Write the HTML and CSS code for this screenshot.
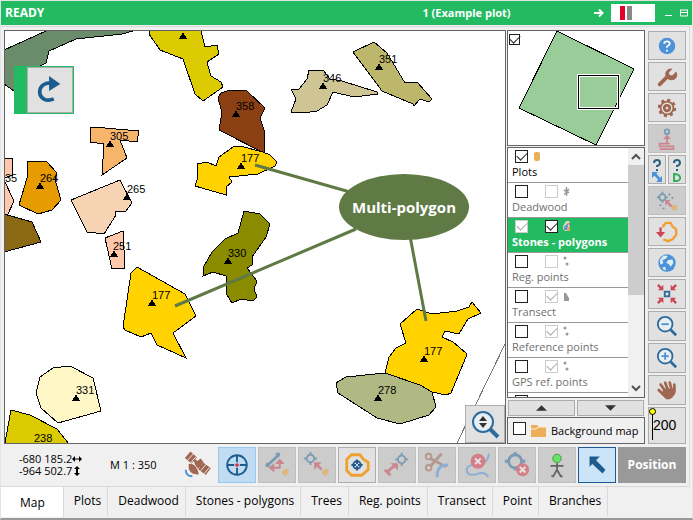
FILE: index.html
```html
<!DOCTYPE html>
<html lang="en">
<head>
<meta charset="utf-8">
<title>Example plot</title>
<link rel="stylesheet" href="styles.css">
</head>
<body>
<header class="titlebar">
  <span class="status">READY</span>
  <h1 class="title">1 (Example plot)</h1>
  <div class="window-tools">
    <svg class="arrow" viewBox="0 0 10 10"><path d="M0 5H7M5 1.500L8.500 5L5 8.500" fill="none" stroke="#fff" stroke-width="2"/></svg>
    <span class="gauge"><i class="bar red"></i><i class="bar grey"></i></span>
    <button class="win" aria-label="Minimize"><svg viewBox="0 0 8 8"><path d="M1 6.500H8" stroke="#fff"/></svg></button>
    <button class="win" aria-label="Restore"><svg viewBox="0 0 8 8"><path d="M.5 1V7H7.500V1M0 1H8M0 3.500H8" fill="none" stroke="#fff"/></svg></button>
  </div>
</header>

<div class="page">
  <main class="workspace">
    <section class="map">
      <svg class="canvas" viewBox="5 31 500 412" preserveAspectRatio="xMinYMin slice">
        <defs><path id="mark" d="M0 1L4 8H-4Z"/></defs>
        <g class="shapes">
          <path fill="#6b8c6b" d="M4 50L46 31V30H133V31L122 34L76 39L49 51L46 63L40 66L30 90L14 91L4 84Z"/>
          <path fill="#dbcb00" d="M150 30L149 34L160 50L183 59L195 94L203 101L223 87L221 82L211 76L207 62L219 54L217 45L205 47L201 31V30Z"/>
          <path fill="#8b4013" d="M218 98L221 93L230 90L247 91L265 108L260 118L264 130V153L219 130L222 112Z"/>
          <path fill="#ffd200" d="M197 164L207 162L216 166L219 157L233 147L240 146L263 152L270 155L277 162L275 166L258 174L229 177L232 182L226 187V195L195 186L198 177Z"/>
          <path fill="#cfc494" d="M309 70H323L330 79L342 81L377 92L378 94L354 97L333 92L327 105L317 111L303 113L291 112L296 99L291 89H299L307 79Z"/>
          <path fill="#bdb76b" d="M353 52L374 42L387 53L393 63L405 83L417 82L432 99L429 102L420 99L414 106L413 104L382 91Z"/>
          <path fill="#f6b56b" d="M90 128L93 127L139 131L137 142L120 140L127 158L102 175L104 144L90 142Z"/>
          <path fill="#e69b00" d="M27 161L47 162L57 173L55 179L61 200L52 210L38 214L19 205L27 178Z"/>
          <path fill="#f6d3b3" d="M71 200L120 180L132 203L126 211L115 212L116 215L104 234L87 232Z"/>
          <path fill="#ffc8ad" d="M105 238L123 231L125 268L112 269Z"/>
          <path fill="#ffc8ad" d="M4 159L12 158L13 175L4 178ZM4 180L14 201L8 214H4Z"/>
          <path fill="#8b6914" d="M4 214L32 222L41 242L4 252Z"/>
          <path fill="#8b8b00" d="M244 211L260 214L270 224L266 237L252 257V265L247 268L257 281L254 289L257 297L253 301L241 299L232 303L227 295L226 276L213 272L203 276L204 266L212 252L225 239L238 233Z"/>
          <path fill="#ffd200" d="M137 267L185 294L196 316L173 333L186 358L157 345L151 333L141 337L125 330L123 327L131 273Z"/>
          <path fill="#fff8c6" d="M53 368L70 366L93 378L101 411L58 423L41 408L36 393L40 377Z"/>
          <path fill="#dbcb00" d="M5 443L11 410L30 415L57 429L69 444H5Z"/>
          <path fill="#ffd200" d="M400 324L417 309L432 314L457 311L469 307L472 302L481 313L468 319L459 334L445 331L442 337L453 342L466 353V357L451 393L446 395L432 392L385 373L389 357L396 348L406 343Z"/>
          <path fill="#b0b883" d="M336 383L346 377L385 373L420 385L432 392L436 407L429 415L400 424L377 418L338 393Z"/>
          <path fill="none" class="edge" d="M506 342L457 443"/>
        </g>
        <g class="labels">
          <use href="#mark" x="183" y="31"/>
          <use href="#mark" x="236" y="109"/><text x="236" y="110">358</text>
          <use href="#mark" x="241" y="161"/><text x="241" y="162">177</text>
          <use href="#mark" x="323" y="81"/><text x="323" y="82">346</text>
          <use href="#mark" x="379" y="62"/><text x="379" y="63">351</text>
          <use href="#mark" x="110" y="139"/><text x="110" y="140">305</text>
          <use href="#mark" x="40" y="181"/><text x="40" y="182">264</text>
          <use href="#mark" x="127" y="192"/><text x="127" y="193">265</text>
          <use href="#mark" x="114" y="249"/><text x="113" y="250">251</text>
          <use href="#mark" x="228" y="256"/><text x="228" y="257">330</text>
          <use href="#mark" x="152" y="298"/><text x="152" y="299">177</text>
          <use href="#mark" x="76" y="393"/><text x="76" y="394">331</text>
          <use href="#mark" x="424" y="354"/><text x="424" y="355">177</text>
          <use href="#mark" x="378" y="393"/><text x="378" y="394">278</text>
          <text x="34" y="442">238</text>
          <text x="5" y="182">35</text>
        </g>
        <g class="callout">
          <path d="M255 165L350 192M175 306L356 229M426 321L410 236"/>
          <ellipse cx="404" cy="207" rx="65" ry="33"/>
          <text x="404" y="213">Multi-polygon</text>
        </g>
      </svg>
      <div class="redo-dock">
        <button class="btn redo" aria-label="Redo"><svg viewBox="0 0 30 32"><path d="M16 8.500C9 8 4 12 4 18C4 25 11 29 19 25.500" fill="none" stroke="#1d5d8e" stroke-width="4"/><path d="M14 1L26 9.500L14 17Z" fill="#1d5d8e"/></svg></button>
      </div>
      <button class="btn zoom-scale" aria-label="Zoom to scale"><svg viewBox="0 0 30 30"><circle cx="13" cy="13" r="10" fill="#e9eef2" stroke="#2d6c9c" stroke-width="2"/><path d="M20 20L28 28" stroke="#2d6c9c" stroke-width="4"/><path d="M13 7L17 12H9ZM13 19L17 14H9Z" fill="#333"/></svg></button>
    </section>

    <aside class="side">
      <div class="overview">
        <svg viewBox="508 31 136 114"><path d="M557 31L634 69L596 145L519 108Z" fill="#99cc99" stroke="#000" shape-rendering="crispEdges"/><rect x="578.500" y="75.500" width="40" height="33" fill="none" stroke="#fff" stroke-width="3"/><rect x="578.500" y="75.500" width="40" height="33" fill="none" stroke="#000"/></svg>
        <input class="check small" type="checkbox" aria-label="Show overview" checked>
      </div>
      <div class="layers">
        <ul class="layer-list">
          <li class="layer primary"><div class="flags"><input class="check" type="checkbox" id="l1" checked><svg viewBox="0 0 10 12"><rect x="2" y="2" width="6" height="9" rx="2" fill="#ecae58"/></svg></div><label for="l1">Plots</label></li>
          <li class="layer"><div class="flags"><input class="check" type="checkbox" id="l2"><input class="check dim" type="checkbox" aria-label="Lock Deadwood"><svg viewBox="0 0 10 12"><path d="M4.500 2V11M2 5L4.500 6.500L7 4M2 9L4.500 8L7 7" fill="none" stroke="#999" stroke-width="1.500"/></svg></div><label for="l2">Deadwood</label></li>
          <li class="layer active"><div class="flags"><input class="check dim" type="checkbox" id="l3" checked><input class="check" type="checkbox" aria-label="Lock Stones" checked><svg viewBox="0 0 10 12"><path d="M4 1H7L8 3V10L7 11H3L1 9V6Z" fill="#d7d7c5"/><path d="M2 7L6 3V10H2Z" fill="#5898d4"/><path d="M6 3H8V7Z" fill="#dd7554"/><path d="M5 7H8V11H5Z" fill="#e6a858"/></svg></div><label for="l3">Stones - polygons</label></li>
          <li class="layer"><div class="flags"><input class="check" type="checkbox" id="l4"><input class="check dim" type="checkbox" aria-label="Lock Reg. points"><svg viewBox="0 0 10 12"><circle cx="3" cy="3" r="1.500" fill="#999"/><circle cx="5" cy="9" r="1.500" fill="#999"/></svg></div><label for="l4">Reg. points</label></li>
          <li class="layer"><div class="flags"><input class="check" type="checkbox" id="l5"><input class="check dim" type="checkbox" aria-label="Lock Transect" checked><svg viewBox="0 0 10 12"><path d="M2 3L4 3L7 8V11H2Z" fill="#999"/></svg></div><label for="l5">Transect</label></li>
          <li class="layer"><div class="flags"><input class="check" type="checkbox" id="l6"><input class="check dim" type="checkbox" aria-label="Lock Reference points" checked><svg viewBox="0 0 10 12"><circle cx="3" cy="3" r="1.500" fill="#999"/><circle cx="5" cy="9" r="1.500" fill="#999"/></svg></div><label for="l6">Reference points</label></li>
          <li class="layer"><div class="flags"><input class="check" type="checkbox" id="l7"><input class="check dim" type="checkbox" aria-label="Lock GPS ref. points" checked><svg viewBox="0 0 10 12"><circle cx="3" cy="3" r="1.500" fill="#999"/><circle cx="5" cy="9" r="1.500" fill="#999"/></svg></div><label for="l7">GPS ref. points</label></li>
          <li class="layer"><div class="flags"><input class="check" type="checkbox" aria-label="Layer"><svg viewBox="0 0 10 12"><path d="M2 2H4V4H2Z" fill="#999"/></svg></div></li>
        </ul>
        <div class="scroll">
          <svg viewBox="0 0 16 17"><path d="M4 11L8 7L12 11" fill="none" stroke="#505050" stroke-width="2"/></svg>
          <div class="thumb"></div>
          <svg viewBox="0 0 16 17"><path d="M4 6L8 10L12 6" fill="none" stroke="#505050" stroke-width="2"/></svg>
        </div>
      </div>
      <div class="order">
        <button class="btn" aria-label="Move up"><svg viewBox="0 0 12 6"><path d="M6 0L12 6H0Z" fill="#333"/></svg></button>
        <button class="btn" aria-label="Move down"><svg viewBox="0 0 12 6"><path d="M0 0H12L6 6Z" fill="#333"/></svg></button>
      </div>
      <label class="background"><input class="check" type="checkbox"><svg viewBox="0 0 16 14"><path d="M0 1H6L8 3H15V13H0Z" fill="#ecae58"/><path d="M0 5H5L7 3H15" fill="none" stroke="#fff3da"/></svg><span>Background map</span></label>
    </aside>

    <nav class="tools">
      <button class="btn" aria-label="Help"><svg viewBox="0 0 24 24"><circle cx="12" cy="12" r="9" fill="#4c92d8"/><path d="M9 9.500Q9 7 12 7Q15 7 15 9.500Q15 11 12 12.500V14" fill="none" stroke="#fff" stroke-width="2"/><path d="M11 16H13V18H11Z" fill="#fff"/></svg></button>
      <button class="btn" aria-label="Settings"><svg viewBox="0 0 24 24"><path d="M4 20L13 11" stroke="#a06650" stroke-width="4" stroke-linecap="round"/><path d="M18 3L14 7L15 10L18 10L22 6A6 6 0 0 1 12 13A6 6 0 0 1 18 3Z" fill="#a06650"/></svg></button>
      <button class="btn" aria-label="Options"><svg viewBox="0 0 24 24"><g fill="none" stroke="#a06650"><circle cx="12" cy="12" r="8.500" stroke-width="3" stroke-dasharray="3.300 3.370"/><circle cx="12" cy="12" r="7" stroke-width="2"/><circle cx="12" cy="12" r="3" stroke-width="3"/></g></svg></button>
      <button class="btn off" aria-label="Instrument" disabled><svg viewBox="0 0 24 24"><circle cx="12" cy="4" r="2.500" fill="none" stroke="#2d6c9c" stroke-width="2"/><path d="M12 18V10M15 17H4V20H19V23H4" fill="none" stroke="#cd4452" stroke-width="2"/><path d="M12 7L16 12H8Z" fill="#cd4452"/></svg></button>
      <div class="pair">
        <button class="btn" aria-label="Query position"><svg viewBox="0 0 14 26"><path d="M4 6Q4 3 7 3Q10 3 10 6Q10 8 7 9V10" fill="none" stroke="#2d6080" stroke-width="2"/><path d="M6 12H8V14H6Z" fill="#2d6080"/><path d="M2 15H8L2 21ZM12 25H6L12 19ZM3 17L5 15L12 23L10 25Z" fill="#4c92d8"/></svg></button>
        <button class="btn" aria-label="Query data"><svg viewBox="0 0 14 26"><path d="M4 6Q4 3 7 3Q10 3 10 6Q10 8 7 9V10" fill="none" stroke="#2d6080" stroke-width="2"/><path d="M6 12H8V14H6Z" fill="#2d6080"/><path d="M4 17V24H7Q11 23 10 20Q9 17 4 17Z" fill="none" stroke="#34ae5a" stroke-width="2"/></svg></button>
      </div>
      <button class="btn off" aria-label="Snap to points" disabled><svg viewBox="0 0 24 24"><circle cx="7" cy="8" r="3.500" fill="none" stroke="#2d6c9c" stroke-width="2"/><path d="M7 2V5M7 11V14M1 8H4M10 8H13" stroke="#2d6c9c" stroke-width="2"/><path d="M14 4L20 11M4 16L9 21" stroke="#2d6c9c" stroke-width="2" stroke-dasharray="2 3"/><path d="M10 11H16L14 13L18 17L16 19L12 15L10 17Z" fill="#cd4452"/><circle cx="20" cy="19" r="3" fill="#f0a030"/></svg></button>
      <button class="btn" aria-label="Close polygon"><svg viewBox="0 0 24 24"><path d="M8 7V5L11 2H16L18 6L22 9V15L18 20L13 22L8 20" fill="none" stroke="#f0a030" stroke-width="2.500"/><path d="M5 7V14" stroke="#cd4452" stroke-width="2.500"/><path d="M0 12H10L5 18Z" fill="#cd4452"/></svg></button>
      <button class="btn" aria-label="World"><svg viewBox="0 0 24 24"><circle cx="12" cy="12" r="9.500" fill="#4c92d8"/><path d="M4 9L8 4L13 4L11 7L7 9L8 12L5 14ZM13 9L18 8L19 12L16 16L14 13L11 12ZM7 17L10 16L11 20L8 19Z" fill="#e1edf5"/></svg></button>
      <button class="btn tall" aria-label="Fit to centre"><svg viewBox="0 0 24 24"><rect x="9.500" y="9.500" width="5" height="5" fill="none" stroke="#2d6c9c" stroke-width="2"/><path d="M2 2L7 7M22 2L17 7M2 22L7 17M22 22L17 17" stroke="#cd4452" stroke-width="2.500"/><path d="M8 2V8H2ZM16 2V8H22ZM8 22V16H2ZM16 22V16H22Z" fill="#cd4452"/></svg></button>
      <button class="btn tall" aria-label="Zoom out"><svg viewBox="0 0 24 24"><circle cx="10" cy="10" r="8" fill="#e9eef2" stroke="#2d6c9c" stroke-width="2"/><path d="M16 16L22 22" stroke="#2d6c9c" stroke-width="3"/><path d="M6 10H14" stroke="#4c92d8" stroke-width="2"/></svg></button>
      <button class="btn tall" aria-label="Zoom in"><svg viewBox="0 0 24 24"><circle cx="10" cy="10" r="8" fill="#e9eef2" stroke="#2d6c9c" stroke-width="2"/><path d="M16 16L22 22" stroke="#2d6c9c" stroke-width="3"/><path d="M6 10H14M10 6V14" stroke="#4c92d8" stroke-width="2"/></svg></button>
      <button class="btn tall" aria-label="Pan"><svg viewBox="0 0 24 24"><path d="M3 12L8 17M5 6L10 13M10 4L13 12M15 4L17 12M20 6L20 14" stroke="#a06650" stroke-width="3" stroke-linecap="round"/><path d="M8 11L21 10L21 16L18 20L15 22H11L6 17Z" fill="#a06650"/></svg></button>
      <button class="btn label-size"><svg viewBox="0 0 8 32"><path d="M3.500 6V32" stroke="#000"/><circle cx="3.500" cy="3.500" r="3" fill="#ff0" stroke="#000"/></svg><span>200</span></button>
    </nav>
  </main>

  <section class="toolbar">
    <div class="coords"><span>-680 185.2<svg viewBox="0 0 10 8"><path d="M1 4H9" stroke="#000"/><path d="M0 4L3 1V7ZM10 4L7 1V7Z"/></svg></span><span>-964 502.7<svg viewBox="0 0 10 10"><path d="M5 1V9" stroke="#000" stroke-width="2"/><path d="M5 0L8 3H2ZM5 10L8 7H2Z"/></svg></span></div>
    <div class="scale">M 1 : 350</div>
    <div class="modes">
      <button class="mode bare" aria-label="GPS"><svg viewBox="0 0 30 30"><path d="M5 4L12 10M19 16L27 22" stroke="#a06650" stroke-width="9"/><path d="M10 8L20 17" stroke="#a06650" stroke-width="3"/><path d="M12 13L19 8L22 12L16 19Z" fill="#a06650"/><path d="M6 14Q14 12 17 25Q5 26 6 14Z" fill="#a06650"/><path d="M11 3L5 10M14 6L8 13M25 14L19 21M28 18L22 25" stroke="#f0f0f0"/><path d="M3 20Q3 27 10 27" fill="none" stroke="#4c92d8" stroke-width="2"/></svg></button>
      <button class="mode on" aria-label="Target"><svg viewBox="0 0 30 30"><circle cx="15" cy="15" r="10.500" fill="none" stroke="#1d5d8e" stroke-width="2"/><path d="M15 5V12M15 18V25M5 15H12M18 15H25" stroke="#1d5d8e" stroke-width="2"/><circle cx="15" cy="15" r="2" fill="#dc3545"/></svg></button>
      <button class="mode off" aria-label="Measure line" disabled><svg viewBox="0 0 30 30"><path d="M5 15L16 5" stroke="#2d6c9c" stroke-width="3"/><circle cx="5" cy="15" r="2.500" fill="#2d6c9c"/><circle cx="16" cy="4" r="2.500" fill="#2d6c9c"/><path d="M9 18H18V12" fill="none" stroke="#cd4452" stroke-width="2"/><path d="M12 13V23L6 18ZM13 14L18 8L23 14Z" fill="#cd4452"/><path d="M21 21L26 19L28 22L24 27L20 24Z" fill="#f0a030"/></svg></button>
      <button class="mode off" aria-label="Measure point" disabled><svg viewBox="0 0 30 30"><circle cx="8" cy="8" r="4" fill="none" stroke="#2d6c9c" stroke-width="2"/><path d="M8 1V4M8 12V15M1 8H4M12 8H15" stroke="#2d6c9c" stroke-width="2"/><path d="M12 12H20L17 15L21 19L19 21L15 17L12 20Z" fill="#cd4452"/><path d="M21 21L26 19L28 22L24 27L20 24Z" fill="#f0a030"/></svg></button>
      <button class="mode" aria-label="Polygon point"><svg viewBox="0 0 30 30"><path d="M9 4H18L22 9L27 12V20L20 26H9L4 21V9Z" fill="none" stroke="#f0a030" stroke-width="3"/><circle cx="15" cy="15" r="4" fill="none" stroke="#1d5d8e" stroke-width="2"/><path d="M15 9V14M15 16V21M9 15H14M16 15H21" stroke="#1d5d8e" stroke-width="2"/></svg></button>
      <button class="mode off" aria-label="Shift point" disabled><svg viewBox="0 0 30 30"><circle cx="20" cy="9" r="4" fill="none" stroke="#2d6c9c" stroke-width="2"/><path d="M20 2V5M20 13V16M13 9H16M24 9H27" stroke="#2d6c9c" stroke-width="2"/><path d="M5 22L12 16M2 20L8 26" stroke="#cd4452" stroke-width="3"/><path d="M8 13H16V21Z" fill="#cd4452"/></svg></button>
      <button class="mode off" aria-label="Cut" disabled><svg viewBox="0 0 30 30"><g fill="none" stroke="#a06650" stroke-width="2"><circle cx="6" cy="6" r="3"/><circle cx="6" cy="18" r="3"/><path d="M8 8L25 17M8 16L20 3" stroke-width="3"/></g><path d="M27 15Q15 14 15 28" fill="none" stroke="#4c92d8" stroke-width="3"/></svg></button>
      <button class="mode off" aria-label="Delete line" disabled><svg viewBox="0 0 30 30"><path d="M28 3Q26 13 19 14Q4 14 4 20Q4 27 14 25Q24 21 27 28" fill="none" stroke="#4c92d8" stroke-width="2"/><circle cx="16" cy="11" r="8" fill="#dc3545"/><path d="M13 8L19 14M19 8L13 14" stroke="#fff" stroke-width="2"/></svg></button>
      <button class="mode off" aria-label="Delete point" disabled><svg viewBox="0 0 30 30"><circle cx="13" cy="11" r="7" fill="none" stroke="#2d6c9c" stroke-width="3"/><path d="M13 1V5M13 17V21M2 11H7M19 11H24" stroke="#2d6c9c" stroke-width="3"/><circle cx="21" cy="20" r="7" fill="#dc3545"/><path d="M18 17L24 23M24 17L18 23" stroke="#fff" stroke-width="2"/></svg></button>
      <button class="mode off person" aria-label="Surveyor"><svg viewBox="0 0 30 30"><circle cx="15" cy="8" r="4.500" fill="#65e565" stroke="#478f47"/><path d="M15 13V21M8 16H22M15 20L11 27H9M15 20L19 27H21" fill="none" stroke="#666" stroke-width="2"/></svg></button>
      <button class="mode selected" aria-label="Select"><svg viewBox="0 0 30 30"><path d="M7 6H18L14 10L24 20L21 24L10 14L7 17Z" fill="#1d5d8e"/></svg></button>
      <button class="position">Position</button>
    </div>
  </section>
</div>

<nav class="tabs">
  <a class="tab current" href="#map">Map</a>
  <a class="tab" href="#plots">Plots</a>
  <a class="tab" href="#deadwood">Deadwood</a>
  <a class="tab" href="#stones">Stones - polygons</a>
  <a class="tab" href="#trees">Trees</a>
  <a class="tab" href="#reg">Reg. points</a>
  <a class="tab" href="#transect">Transect</a>
  <a class="tab" href="#point">Point</a>
  <a class="tab" href="#branches">Branches</a>
</nav>
</body>
</html>
```
FILE: styles.css
```css
* { box-sizing: border-box; }

body {
  margin: 0;
  height: 100vh;
  display: flex;
  flex-direction: column;
  background: #f0f0f0;
  border: 1px solid #e4e4e4;
  border-bottom: 2px solid #999;
  color: #000;
  font: 12px/16px "Open Sans", "Noto Sans", sans-serif;
  overflow: hidden;
}

svg { display: block; }
button { font: inherit; color: inherit; margin: 0; padding: 0; }

.titlebar {
  display: grid;
  grid-template-columns: 1fr auto 1fr;
  align-items: center;
  height: 24px;
  padding: 0 4px;
  background: #22bb62;
  color: #fff;
  font-weight: 700;
}
.title { grid-column: 2; margin: 0; font-size: 11px; padding-left: 240px; }
.window-tools { display: flex; justify-content: flex-end; align-items: center; }
.arrow { width: 10px; height: 10px; margin-right: 7px; }
.gauge { display: flex; gap: 2px; width: 44px; height: 18px; padding: 2px 9px; margin-right: 9px; background: #fff; }
.bar { width: 5px; height: 14px; }
.red { background: #e4002b; }
.grey { background: #888; }
.win { width: 8px; height: 8px; border: 0; background: none; }
.win + .win { margin-left: 8px; }

.page {
  flex: 1;
  min-height: 0;
  display: flex;
  flex-direction: column;
  margin: 1px 2px 0 0;
  padding: 3px 3px 0;
  border: solid #d9d9d9;
  border-width: 1px 1px 1px 0;
}
.workspace { flex: 1; min-height: 0; display: flex; }

.map {
  position: relative;
  flex: 1;
  min-width: 0;
  border: 1px solid #646464;
  background: #fff;
  overflow: hidden;
}
.canvas { width: 100%; height: 100%; }
.shapes { stroke: #000; shape-rendering: crispEdges; }
.edge { stroke: #777; }
.labels { font: 11px "Liberation Sans", sans-serif; }
.labels use { shape-rendering: crispEdges; }
.callout path { stroke: #5f7a44; stroke-width: 3; }
.callout ellipse { fill: #5f7a44; }
.callout text { fill: #fff; font-size: 15px; font-weight: 700; text-anchor: middle; }

.btn {
  display: flex;
  align-items: center;
  justify-content: center;
  border: 1px solid #adadad;
  background: #e1e1e1;
}
.redo-dock { position: absolute; left: 9px; top: 35px; padding: 1px 1px 1px 13px; background: #22bb62; }
.redo { width: 46px; height: 46px; }
.redo svg { width: 28px; height: 30px; }
.zoom-scale { position: absolute; right: 0; bottom: 0; width: 40px; height: 38px; }
.zoom-scale svg { width: 30px; height: 30px; }

.side { width: 138px; margin-left: 1px; display: flex; flex-direction: column; }
.overview { position: relative; height: 116px; border: 1px solid #646464; background: #fff; }
.overview svg { width: 100%; height: 100%; }
.overview .check { position: absolute; left: 1px; top: 3px; }

.check {
  appearance: none;
  flex: none;
  width: 13px;
  height: 13px;
  margin: 0;
  border: 1px solid #222;
  background: #fff;
  display: grid;
  place-items: center;
}
.check.small { width: 11px; height: 11px; }
.check:checked::after {
  content: "";
  width: 9px;
  height: 5px;
  border: solid #222;
  border-width: 0 0 1px 1px;
  rotate: -45deg;
  margin-bottom: 3px;
}
.check.dim { border-color: #ccc; }
.check.dim:checked::after { border-color: #aaa; }

.layers { flex: 1; min-height: 0; display: flex; margin-top: 1px; border: 1px solid #646464; background: #fff; }
.layer-list { flex: 1; min-width: 0; margin: 0; padding: 0; list-style: none; overflow: hidden; font-size: 11px; }
.layer { height: 35px; padding: 1px 4px 0; border-bottom: 1px solid #999; color: #707070; white-space: nowrap; }
.layer label { display: block; line-height: 17px; }
.layer.primary { color: #000; }
.layer.active { background: #22bb62; color: #fff; font-weight: 700; }
.flags { display: flex; align-items: center; height: 14px; padding-left: 3px; }
.flags .check + .check { margin-left: 17px; }
.flags svg { width: 10px; height: 12px; margin-left: 4px; }
.scroll { width: 16px; display: flex; flex-direction: column; background: #f0f0f0; }
.scroll svg { width: 16px; height: 17px; }
.thumb { height: 130px; margin-bottom: auto; background: #cdcdcd; }

.order { display: flex; gap: 2px; padding: 2px 1px 1px; }
.order .btn { flex: 1; height: 16px; }
.order svg { width: 11px; height: 6px; }
.background { display: flex; align-items: center; height: 27px; padding-left: 5px; border: 1px solid #646464; white-space: nowrap; font-size: 11px; }
.background .check { margin-bottom: 5px; }
.background svg { width: 16px; height: 14px; margin: 0 4px 0 5px; }

.tools { width: 38px; margin: 1px 0 0 3px; display: flex; flex-direction: column; gap: 2px; }
.tools .btn { height: 29px; }
.tools svg { width: 22px; height: 22px; }
.tools .tall { height: 30px; }
.pair { display: flex; gap: 2px; }
.pair .btn { flex: 1; }
.tools .pair svg { width: 14px; height: 26px; }
.btn.off { background: #ccc; border-color: #bfbfbf; }
.off svg { opacity: .5; }
.tools .label-size { flex: 1; align-items: stretch; justify-content: flex-start; font: 14px/34px "Liberation Sans", sans-serif; }
.tools .label-size svg { width: 8px; height: 32px; margin-right: -4px; flex: none; }

.toolbar { display: flex; align-items: center; height: 42px; white-space: nowrap; }
.coords { margin-left: 15px; display: flex; flex-direction: column; font-size: 11px; line-height: 12px; width: 91px; }
.coords span { display: flex; align-items: center; }
.coords svg { width: 10px; height: 10px; }
.scale { font-size: 11px; }
.modes { margin-left: auto; display: flex; gap: 2px; padding-bottom: 1px; }
.mode {
  width: 38px;
  height: 36px;
  display: flex;
  align-items: center;
  justify-content: center;
  border: 1px solid #adadad;
  background: #e1e1e1;
}
.mode svg { width: 28px; height: 28px; }
.mode.bare { border: 0; background: none; }
.mode.on { border-color: #99c9ef; background: #bfdcf3; }
.mode.off { border-color: #bfbfbf; background: #ccc; }
.mode.person svg { opacity: 1; }
.mode.selected { border-color: #1c5a94; background: #cce4f7; }
.position { width: 68px; height: 36px; border: 0; background: #999; color: #fff; font-weight: 700; }

.tabs { display: flex; height: 31px; }
.tab {
  padding: 6px 6px 7px 10px;
  border-right: 1px solid #d9d9d9;
  color: #000;
  text-decoration: none;
  white-space: nowrap;
  height: 29px;
}
.tab.current { height: 30px; padding: 8px 18px 6px 19px; background: #fff; }
```
